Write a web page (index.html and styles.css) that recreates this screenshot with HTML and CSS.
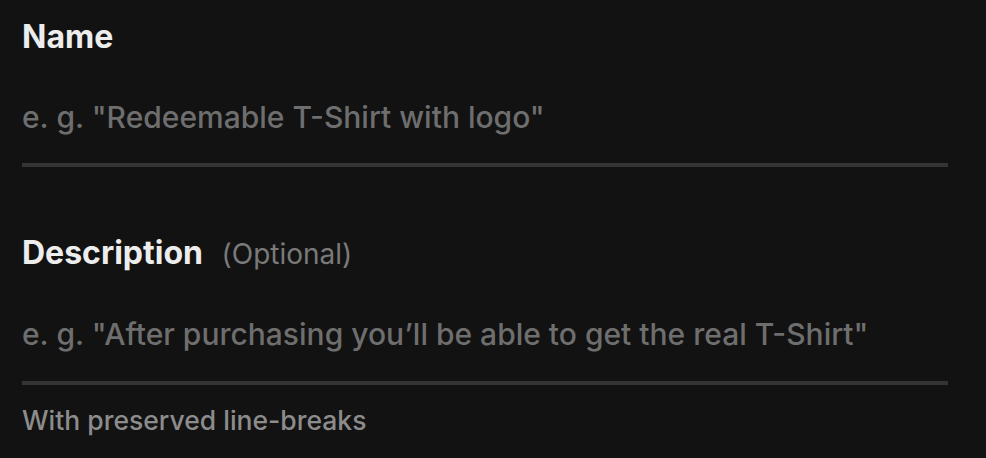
FILE: index.html
```html
<!DOCTYPE html>
<html lang="en">
<head>
    <meta charset="UTF-8">
    <meta name="viewport" content="width=device-width, initial-scale=1.0">
    <title>New reward</title>
    <link rel="stylesheet" href="styles.css">
</head>
<body>
    <form class="form">
        <div class="field">
            <label class="label" for="name">Name</label>
            <input type="text" id="name" class="input" placeholder='e. g. "Redeemable T-Shirt with logo"'>
        </div>

        <div class="field">
            <label class="label" for="description">Description <span class="optional">(Optional)</span></label>
            <textarea id="description" class="input textarea" rows="1" placeholder='e. g. "After purchasing you’ll be able to get the real T-Shirt"'></textarea>
            <p class="hint">With preserved line-breaks</p>
        </div>
    </form>
</body>
</html>
```

FILE: styles.css
```css
body {
    margin: 0;
    background-color: #121212;
    color: #f0f0f0;
    font-family: Inter, Lato, sans-serif;
    font-variant-ligatures: none;
}
.form {
    width: 926px;
    padding: 17px 22px 0;
    display: flex;
    flex-direction: column;
    gap: 66px;
}
.field {
    display: flex;
    flex-direction: column;
}
.label {
    font-size: 32px;
    font-weight: 700;
    line-height: 40px;
    color: #ededed;
}
.optional {
    margin-left: 11px;
    font-size: 28px;
    font-weight: 400;
    color: #7a7a7a;
}
.input {
    margin-top: 40px;
    padding: 0 0 26px;
    border: none;
    border-bottom: 4px solid #343434;
    background: transparent;
    color: #ddd;
    font-family: inherit;
    font-size: 30px;
    font-weight: 500;
    line-height: 40px;
    outline: none;
}
.input::placeholder { color: #6e6e6e; }
.textarea {
    box-sizing: content-box;
    height: 40px;
    padding-bottom: 27px;
    resize: none;
    overflow: hidden;
}
.hint {
    margin: 19px 0 0;
    font-size: 26.5px;
    font-weight: 500;
    line-height: 32px;
    color: #8c8c8c;
}
```
